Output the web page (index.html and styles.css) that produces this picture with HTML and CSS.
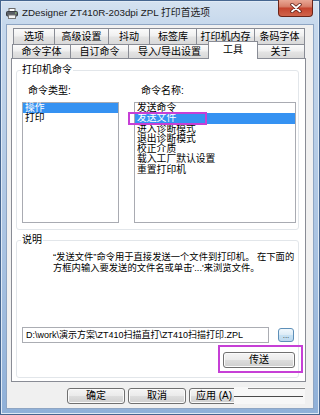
FILE: index.html
```html
<!DOCTYPE html>
<html>
<head>
<meta charset="utf-8">
<link rel="stylesheet" href="styles.css">
</head>
<body>
<div class="window">
  <div class="titlebar">
    <svg class="appicon" width="12" height="11" viewBox="0 0 12 11">
      <rect x="3" y="0.5" width="6" height="3" fill="#fff" stroke="#6a6a6a"/>
      <rect x="0.5" y="3.5" width="11" height="4.5" rx="1" fill="#5b5f66" stroke="#3a3d42"/>
      <rect x="2.5" y="7" width="7" height="3.5" fill="#f4f4f4" stroke="#777"/>
      <rect x="9" y="4.5" width="1.5" height="1" fill="#9fe07a"/>
    </svg>
    <span class="title">ZDesigner ZT410R-203dpi ZPL 打印首选项</span>
    <div class="close">
      <svg width="12" height="10" viewBox="0 0 12 10">
        <path d="M2 1.5 L10 8.5 M10 1.5 L2 8.5" stroke="#5a1a12" stroke-width="3.4" stroke-linecap="round"/>
        <path d="M2 1.5 L10 8.5 M10 1.5 L2 8.5" stroke="#fff" stroke-width="1.8" stroke-linecap="round"/>
      </svg>
    </div>
  </div>
  <div class="client">
    <div class="tabs">
      <div class="tabrow row1">
        <div class="tab">选项</div>
        <div class="tab">高级设置</div>
        <div class="tab">抖动</div>
        <div class="tab">标签库</div>
        <div class="tab">打印机内存</div>
        <div class="tab last">条码字体</div>
      </div>
      <div class="tabrow row2">
        <div class="tab">命令字体</div>
        <div class="tab">自订命令</div>
        <div class="tab">导入/导出设置</div>
        <div class="tab active">工具</div>
        <div class="tab last">关于</div>
      </div>
    </div>
    <div class="panel">
      <fieldset class="group cmds">
        <legend>打印机命令</legend>
        <div class="cols">
          <div class="col">
            <div class="lbl lbl-left">命令类型:</div>
            <div class="list">
              <div class="item sel">操作</div>
              <div class="item">打印</div>
            </div>
          </div>
          <div class="col">
            <div class="lbl lbl-right">命令名称:</div>
            <div class="list">
              <div class="item">发送命令</div>
              <div class="item sel marked">发送文件</div>
              <div class="item">进入诊断模式</div>
              <div class="item">退出诊断模式</div>
              <div class="item">校正介质</div>
              <div class="item">载入工厂默认设置</div>
              <div class="item">重置打印机</div>
            </div>
          </div>
        </div>
      </fieldset>
      <fieldset class="group desc">
        <legend>说明</legend>
        <p class="desc-text">“发送文件”命令用于直接发送一个文件到打印机。 在下面的<br>方框内输入要发送的文件名或单击'...'来浏览文件。</p>
        <div class="pathrow">
          <div class="pathbox">D:\work\演示方案\ZT410扫描直打\ZT410扫描打印.ZPL</div>
          <div class="browse">...</div>
        </div>
        <div class="sendrow">
          <div class="mark"><div class="btn send">传送</div></div>
        </div>
      </fieldset>
    </div>
    <div class="buttons">
      <div class="btn">确定</div>
      <div class="btn">取消</div>
      <div class="btn apply">应用 (A)</div>
      <div class="btn blank"></div>
    </div>
  </div>
  <div class="scribble"></div>
</div>
</body>
</html>
```

FILE: styles.css
```css
html, body {
  margin: 0;
  padding: 0;
}
body {
  background: #fff;
}
.window {
  position: relative;
  width: 320px;
  height: 415px;
  display: flex;
  flex-direction: column;
  box-sizing: border-box;
  background: linear-gradient(180deg, #d5e2f0 0, #c6d8ec 25px, #a9c3e2 60%, #8fb0d8 100%);
  box-shadow: inset 0 0 0 1px #45658f, inset 0 0 0 2px #e0eaf5;
  font-family: "Liberation Sans", "Noto Sans CJK SC", sans-serif;
  font-size: 10px;
  color: #000;
}
.titlebar {
  height: 25px;
  display: flex;
  align-items: flex-start;
  flex: none;
}
.appicon {
  margin: 8px 0 0 6px;
  flex: none;
}
.title {
  margin: 7px 0 0 4px;
  font-size: 9.8px;
  line-height: 12px;
  color: #1a1a1a;
  white-space: nowrap;
}
.close {
  margin-left: auto;
  margin-right: 7px;
  width: 35px;
  height: 17px;
  box-sizing: border-box;
  border: 1px solid #6b2418;
  border-top: none;
  border-radius: 0 0 4px 4px;
  background: linear-gradient(180deg, #e9a795 0%, #d8806b 40%, #c5452f 52%, #d0644b 100%);
  display: flex;
  align-items: center;
  justify-content: center;
}
.client {
  flex: 1;
  margin: 0 7px 7px 7px;
  background: #f0f0f0;
  box-shadow: 0 0 0 1px #8ea5c3;
  padding: 3px 7px 0 4px;
  display: flex;
  flex-direction: column;
}
.tabs {
  display: flex;
  flex-direction: column;
}
.tabrow {
  display: grid;
  align-items: start;
}
.row1 {
  grid-template-columns: 41px 54px 41px 47px 58px 51px;
  margin-left: 2px;
  height: 16px;
}
.row2 {
  grid-template-columns: 58px 58px 82px 46px 49px;
  margin-left: 1px;
  height: 14px;
}
.tab {
  box-sizing: border-box;
  border: 1px solid #898c95;
  border-bottom: none;
  border-right: none;
  background: linear-gradient(180deg, #fbfbfb 0%, #f0f0f0 45%, #e3e3e3 55%, #d9d9d9 100%);
  text-align: center;
  white-space: nowrap;
}
.tab.last {
  border-right: 1px solid #898c95;
}
.row1 .tab {
  height: 16px;
  line-height: 15px;
}
.row2 .tab {
  height: 14px;
  line-height: 13px;
}
.row2 .tab.active {
  position: relative;
  z-index: 2;
  height: 18px;
  margin: -3px -2px -1px -2px;
  line-height: 16px;
  background: #fff;
  border-right: 1px solid #898c95;
}
.panel {
  height: 324px;
  box-sizing: border-box;
  border: 1px solid #898c95;
  background: #fff;
  display: flex;
  flex-direction: column;
}
.group {
  margin: 5px 6px 0 4px;
  padding: 0;
  border: 1px solid #e2e6ea;
  border-radius: 3px;
  min-width: 0;
}
.group legend {
  margin-left: 4px;
  padding: 0 1px;
  line-height: 12px;
  font-size: 10px;
}
.group.desc {
  margin-top: 4px;
  padding-bottom: 4px;
}
.cols {
  display: grid;
  grid-template-columns: 97px 162px;
  column-gap: 15px;
  padding: 9px 0 6px 5px;
}
.lbl {
  line-height: 12px;
  margin-bottom: 5px;
}
.lbl-left {
  padding-left: 6px;
}
.lbl-right {
  padding-left: 7px;
}
.list {
  height: 121px;
  box-sizing: border-box;
  border: 1px solid #a9abb2;
  background: #fff;
  font-size: 9.8px;
}
.item {
  line-height: 10.3px;
  height: 10.3px;
  padding-left: 2px;
  white-space: nowrap;
}
.item.sel {
  background: #3592f2;
  color: #fff;
}
.item.marked {
  position: relative;
}
.item.marked::after {
  content: "";
  position: absolute;
  left: -7px;
  top: -1px;
  width: 79px;
  height: 13px;
  box-sizing: border-box;
  border: 2px solid #c63fd6;
}
.desc-text {
  margin: 6px 0 0 36px;
  font-size: 9.3px;
  line-height: 10.5px;
  white-space: nowrap;
}
.pathrow {
  display: flex;
  align-items: flex-start;
  margin-top: 54px;
}
.pathbox {
  margin-left: 5px;
  width: 247px;
  height: 16px;
  box-sizing: border-box;
  border: 1px solid #abadb3;
  padding-left: 3px;
  font-size: 9px;
  line-height: 14px;
  white-space: nowrap;
  overflow: hidden;
}
.browse {
  margin: 1px 0 0 9px;
  width: 16px;
  height: 14px;
  box-sizing: border-box;
  border: 1px solid #5d8fb8;
  border-radius: 3px;
  background: linear-gradient(180deg, #f1f8fd 0%, #dcebf6 50%, #c7e1f3 52%, #bcd9ef 100%);
  font-size: 8px;
  line-height: 14px;
  text-align: center;
  color: #333;
}
.sendrow {
  display: flex;
  justify-content: flex-end;
  margin: 2px -5px 0 0;
}
.mark {
  border: 2px solid #c63fd6;
  padding: 5px 6px 3px 3px;
}
.btn {
  width: 58px;
  height: 16px;
  box-sizing: border-box;
  border: 1px solid #707070;
  border-radius: 3px;
  background: linear-gradient(180deg, #f4f4f4 0%, #ebebeb 48%, #dddddd 52%, #cfcfcf 100%);
  box-shadow: inset 0 0 0 1px #fbfbfb;
  text-align: center;
  line-height: 14px;
  font-size: 10px;
  white-space: nowrap;
}
.btn.send {
  width: 72px;
}
.btn.apply {
  text-align: left;
  padding-left: 6px;
}
.buttons {
  display: flex;
  gap: 3px;
  margin-top: 6px;
  padding-left: 56px;
}
.btn.blank {
  width: 55px;
}
.scribble {
  position: absolute;
  left: 234px;
  top: 387px;
  width: 71px;
  height: 17px;
  background: #f7f7f7;
}
.scribble::before {
  content: "";
  position: absolute;
  left: 14px;
  top: 1px;
  width: 57px;
  height: 1px;
  background: #8a8a8a;
}
.scribble::after {
  content: "";
  position: absolute;
  left: 0;
  top: 9px;
  width: 69px;
  height: 1px;
  background: #4a4a4a;
}
```
